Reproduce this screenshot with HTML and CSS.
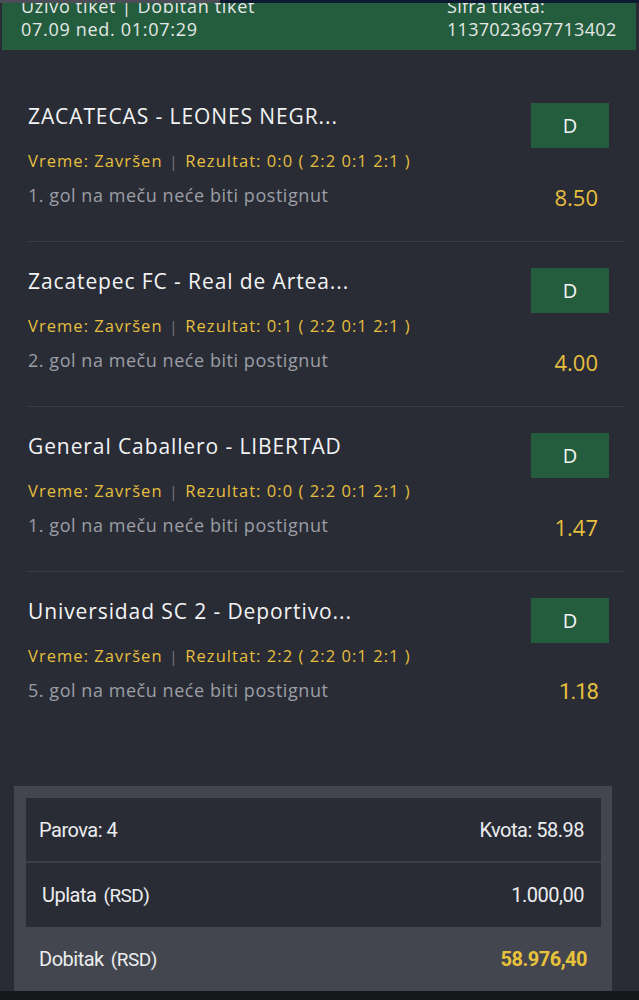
FILE: index.html
```html
<!DOCTYPE html>
<html lang="sr">
<head>
<meta charset="utf-8">
<title>Tiket</title>
<link rel="stylesheet" href="styles.css">
</head>
<body>
<div class="page">
  <div class="topstrip"><span class="ts-a"></span><span class="ts-b"></span></div>
  <header class="ticket-head">
    <div class="th-col left">
      <div class="th-line first">Uživo tiket | Dobitan tiket</div>
      <div class="th-line">07.09 ned. 01:07:29</div>
    </div>
    <div class="th-col right">
      <div class="th-line first">Šifra tiketa:</div>
      <div class="th-line">1137023697713402</div>
    </div>
  </header>

  <main class="list">
    <section class="row">
      <div class="info">
        <div class="title">ZACATECAS - LEONES NEGR...</div>
        <div class="meta">Vreme: Završen<span class="sep">|</span>Rezultat: 0:0 ( 2:2 0:1 2:1 )</div>
        <div class="market">1. gol na meču neće biti postignut</div>
      </div>
      <div class="side">
        <div class="pick">D</div>
        <div class="odds">8.50</div>
      </div>
    </section>
    <section class="row">
      <div class="info">
        <div class="title">Zacatepec FC - Real de Artea...</div>
        <div class="meta">Vreme: Završen<span class="sep">|</span>Rezultat: 0:1 ( 2:2 0:1 2:1 )</div>
        <div class="market">2. gol na meču neće biti postignut</div>
      </div>
      <div class="side">
        <div class="pick">D</div>
        <div class="odds">4.00</div>
      </div>
    </section>
    <section class="row">
      <div class="info">
        <div class="title">General Caballero - LIBERTAD</div>
        <div class="meta">Vreme: Završen<span class="sep">|</span>Rezultat: 0:0 ( 2:2 0:1 2:1 )</div>
        <div class="market">1. gol na meču neće biti postignut</div>
      </div>
      <div class="side">
        <div class="pick">D</div>
        <div class="odds">1.47</div>
      </div>
    </section>
    <section class="row last">
      <div class="info">
        <div class="title">Universidad SC 2 - Deportivo...</div>
        <div class="meta">Vreme: Završen<span class="sep">|</span>Rezultat: 2:2 ( 2:2 0:1 2:1 )</div>
        <div class="market">5. gol na meču neće biti postignut</div>
      </div>
      <div class="side">
        <div class="pick">D</div>
        <div class="odds narrow">1.18</div>
      </div>
    </section>
  </main>

  <section class="summary">
    <div class="sum-inner">
      <div class="sum-row"><span>Parova: 4</span><span>Kvota: 58.98</span></div>
      <div class="sum-row indent"><span>Uplata<span class="unit">(RSD)</span></span><span>1.000,00</span></div>
    </div>
    <div class="sum-row win"><span>Dobitak<span class="unit">(RSD)</span></span><span class="win-val">58.976,40</span></div>
  </section>
  <div class="bottombar"></div>
</div>
</body>
</html>
```

FILE: styles.css
```css
html, body {
  margin: 0;
  padding: 0;
  background: #292c35;
}

.page {
  height: 1000px;
  overflow: hidden;
  display: flex;
  flex-direction: column;
  font-family: "Open Sans", "Liberation Sans", sans-serif;
  color: #eceef0;
}

.topstrip {
  display: flex;
  height: 3px;
  flex: none;
}
.ts-a { width: 220px; background: #4b4e57; }
.ts-b { flex: 1; background: #0d1a31; }

.ticket-head {
  flex: none;
  height: 47px;
  margin: 0 3px 0 2px;
  background: #245c3e;
  overflow: hidden;
  display: grid;
  grid-template-columns: 445px 1fr;
}
.th-col.left { padding-left: 19px; }
.th-line {
  font-size: 18px;
  line-height: 23px;
  letter-spacing: 0.3px;
  color: #e4e8e6;
  white-space: nowrap;
}
.th-col.left .th-line { letter-spacing: 0.7px; }
.th-line.first { margin-top: -8.5px; }

.list {
  flex: none;
  padding-top: 27px;
}

.row {
  box-sizing: border-box;
  height: 165px;
  margin: 0 14px 0 28px;
  padding: 26px 16px 0 0;
  border-bottom: 1px solid #3a3d46;
  display: grid;
  grid-template-columns: 1fr 78px;
}
.row.last { border-bottom-color: transparent; }

.title {
  font-size: 21px;
  line-height: 26px;
  letter-spacing: 0.9px;
  color: #f2f3f4;
  white-space: nowrap;
}
.meta {
  margin-top: 22px;
  font-size: 16.5px;
  line-height: 20px;
  letter-spacing: 1.05px;
  color: #e6bf3e;
  white-space: nowrap;
}
.sep {
  color: #7c7e86;
  font-size: 14px;
  margin: 0 7px;
}
.market {
  margin-top: 13px;
  font-size: 18px;
  line-height: 20px;
  letter-spacing: 0.55px;
  color: #9c9ea5;
  white-space: nowrap;
}

.pick {
  height: 45px;
  background: #245c3e;
  color: #f2f4f3;
  font-size: 20px;
  display: flex;
  align-items: center;
  justify-content: center;
}
.odds {
  margin-top: 36px;
  padding-right: 11px;
  text-align: right;
  font-size: 22px;
  line-height: 26px;
  color: #e6bf3e;
}
.odds.narrow {
  font-family: "Roboto", "Liberation Sans", sans-serif;
  letter-spacing: -1px;
}

.summary {
  margin: auto 27px 0 14px;
  background: #43464e;
  padding: 12px 11px 0 12px;
  font-family: "Roboto", "Liberation Sans", sans-serif;
  font-size: 20px;
  letter-spacing: -0.5px;
  color: #ecedef;
}
.sum-inner { background: #292c35; }
.sum-row {
  box-sizing: border-box;
  height: 63px;
  padding: 0 17px 0 13px;
  display: flex;
  align-items: center;
  justify-content: space-between;
}
.sum-row.indent {
  height: 66px;
  padding-left: 16px;
  border-top: 2px solid #3b3e47;
}
.unit { margin-left: 7px; font-size: 19px; }
.sum-row.win {
  height: 64px;
  padding-right: 14px;
}
.win-val {
  color: #e9c23b;
  font-weight: 700;
}

.bottombar {
  flex: none;
  height: 9px;
  background: #15171b;
}
```
